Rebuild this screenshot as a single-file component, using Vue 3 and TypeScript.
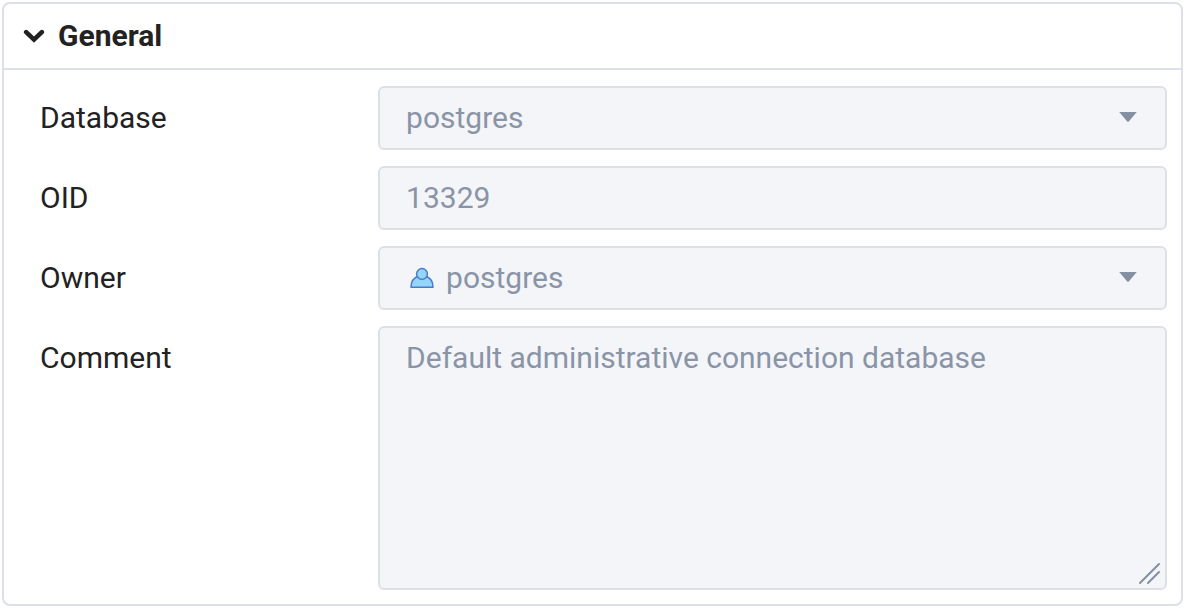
<script setup lang="ts">
import { ref } from 'vue'

const open = ref(true)
const database = ref('postgres')
const oid = ref('13329')
const owner = ref('postgres')
const comment = ref('Default administrative connection database')
</script>

<template>
  <section class="panel">
    <button
      class="panel-header"
      :class="{ closed: !open }"
      type="button"
      :aria-expanded="open"
      aria-controls="general-fields"
      @click="open = !open"
    >
      <svg class="chevron" viewBox="0 0 22 16" aria-hidden="true">
        <path d="M3.2 4.2 L11 11.6 L18.8 4.2" />
      </svg>
      <span>General</span>
    </button>

    <form v-show="open" id="general-fields" class="fields" @submit.prevent>
      <label for="database">Database</label>
      <div class="field">
        <select id="database" v-model="database" class="control" disabled>
          <option value="postgres">postgres</option>
        </select>
        <svg class="arrow" viewBox="0 0 20 12" aria-hidden="true">
          <path d="M1.2 1 H18.8 L11 10.2 Q10 11.2 9 10.2 Z" />
        </svg>
      </div>

      <label for="oid">OID</label>
      <div class="field">
        <input id="oid" v-model="oid" class="control text" type="text" disabled />
      </div>

      <label for="owner">Owner</label>
      <div class="field">
        <svg class="role" viewBox="0 0 24 22" aria-hidden="true">
          <path d="M1 20.2 C1 14.5 4.2 10.6 8.2 9 H15.8 C19.8 10.6 23 14.5 23 20.2 Z" />
          <circle cx="12" cy="7" r="5.4" />
        </svg>
        <select id="owner" v-model="owner" class="control with-icon" disabled>
          <option value="postgres">postgres</option>
        </select>
        <svg class="arrow" viewBox="0 0 20 12" aria-hidden="true">
          <path d="M1.2 1 H18.8 L11 10.2 Q10 11.2 9 10.2 Z" />
        </svg>
      </div>

      <label for="comment">Comment</label>
      <div class="field">
        <textarea id="comment" v-model="comment" class="control area" rows="7" disabled></textarea>
        <svg class="grip" viewBox="0 0 24 24" aria-hidden="true">
          <path d="M2 22 L21 3 M10 22 L21 11" />
        </svg>
      </div>
    </form>
  </section>
</template>

<style>
body {
  background: #fff;
}
</style>

<style scoped>
.panel {
  margin: 2px 3px 2px 2px;
  border: 2px solid #dee0e7;
  border-radius: 8px;
  background: #fff;
  color: #222;
  font-family: Roboto, "Liberation Sans", sans-serif;
  font-size: 30px;
  line-height: 36px;
}

.panel-header {
  display: flex;
  align-items: center;
  gap: 13px;
  box-sizing: border-box;
  width: 100%;
  height: 66px;
  margin: 0;
  padding: 0 19px;
  border: 0;
  border-bottom: 2px solid #dee0e7;
  background: none;
  color: inherit;
  font: inherit;
  font-weight: 700;
  text-align: left;
}

.panel-header.closed {
  border-bottom: 0;
}

.chevron {
  width: 22px;
  height: 16px;
  fill: none;
  stroke: #222;
  stroke-width: 4.6;
  stroke-linecap: round;
}

.closed .chevron {
  transform: rotate(-90deg);
}

.fields {
  display: grid;
  grid-template-columns: minmax(0, 3fr) minmax(0, 7fr);
  row-gap: 16px;
  padding: 16px 14px 14px 36px;
}

.fields label {
  padding-top: 14px;
}

.field {
  position: relative;
  display: flex;
}

.control {
  box-sizing: border-box;
  width: 100%;
  height: 64px;
  margin: 0;
  padding: 0 26px;
  border: 2px solid #dee0e7;
  border-radius: 6px;
  background: #f3f5f9;
  color: #8a94a6;
  font: inherit;
  opacity: 1;
  appearance: none;
}

.text {
  padding-bottom: 2px;
}

.with-icon {
  padding-left: 66px;
}

.area {
  height: 264px;
  padding-top: 12px;
  resize: none;
}

.arrow {
  position: absolute;
  top: 25px;
  right: 29px;
  width: 20px;
  height: 12px;
  fill: #848fa1;
  pointer-events: none;
}

.role {
  position: absolute;
  top: 21px;
  left: 32px;
  width: 24px;
  height: 22px;
  fill: #94d5fa;
  stroke: #4a7bcb;
  stroke-width: 1.5;
  stroke-linejoin: round;
}

.grip {
  position: absolute;
  right: 5px;
  bottom: 5px;
  width: 24px;
  height: 24px;
  fill: none;
  stroke: #848fa1;
  stroke-width: 2;
  stroke-linecap: round;
  pointer-events: none;
}
</style>
